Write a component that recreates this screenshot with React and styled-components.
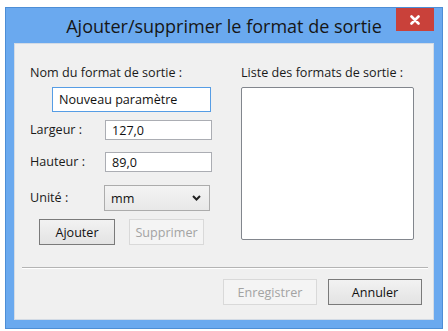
import styled, { createGlobalStyle } from "styled-components";

const Global = createGlobalStyle`
  body {
    margin: 0;
    background: #ffffff;
    font-family: "Open Sans", "Noto Sans", sans-serif;
  }
`;

const Window = styled.div`
  box-sizing: border-box;
  width: 438px;
  height: 322px;
  margin: 7px 0 0 5px;
  padding: 0 8px 8px;
  display: flex;
  flex-direction: column;
  background: #6aa9ef;
  border: 1px solid #4d8ed6;
`;

const TitleBar = styled.div`
  height: 35px;
  display: grid;
  grid-template-columns: 1fr auto 1fr;
  align-items: center;
`;

const Title = styled.div`
  grid-column: 2;
  font-size: 18px;
  color: #161616;
  white-space: nowrap;
`;

const CloseButton = styled.div`
  grid-column: 3;
  justify-self: end;
  align-self: start;
  width: 38px;
  height: 23px;
  display: flex;
  align-items: center;
  justify-content: center;
  background: #c9413a;
`;

const Body = styled.div`
  flex: 1;
  display: flex;
  flex-direction: column;
  background: #f0f0f0;
  box-shadow: inset 0 0 0 1px #d3dbe5;
`;

const Main = styled.div`
  display: flex;
  gap: 16px;
  padding: 23px 0 0 16px;
`;

const Column = styled.div`
  width: ${(p) => p.width}px;
  display: flex;
  flex-direction: column;
`;

const Label = styled.div`
  font-size: 12.6px;
  line-height: 14px;
  color: #1a1a1a;
  white-space: nowrap;
  width: ${(p) => (p.width ? `${p.width}px` : "auto")};
  flex-shrink: 0;
`;

const TextBox = styled.input`
  box-sizing: border-box;
  width: ${(p) => p.width}px;
  height: ${(p) => p.height}px;
  margin: ${(p) => p.margin || 0};
  padding: 0 6px;
  font-family: inherit;
  font-size: 12.6px;
  color: #111;
  background: #fff;
  border: 1px solid ${(p) => (p.focused ? "#569de5" : "#abadb3")};
  outline: none;
`;

const FieldRow = styled.div`
  display: flex;
  align-items: center;
  margin-top: ${(p) => p.top}px;
`;

const Select = styled.div`
  box-sizing: border-box;
  width: 106px;
  height: 26px;
  display: flex;
  align-items: center;
  justify-content: space-between;
  padding: 0 8px 0 6px;
  font-size: 12.6px;
  color: #111;
  background: linear-gradient(#f4f4f4, #e8e8e8);
  border: 1px solid #acacac;
`;

const ButtonRow = styled.div`
  display: flex;
  gap: 14px;
  margin-top: 8px;
  padding-left: 9px;
`;

const Button = styled.button`
  box-sizing: border-box;
  width: ${(p) => p.width}px;
  height: 26px;
  padding: 0;
  font-family: inherit;
  font-size: 12.6px;
  color: ${(p) => (p.disabled ? "#a3a3a3" : "#111")};
  background: ${(p) =>
    p.disabled ? "#f4f4f4" : "linear-gradient(#f2f2f2, #e3e3e3)"};
  border: 1px solid ${(p) => (p.disabled ? "#d9d9d9" : p.primary ? "#7a7a7a" : "#acacac")};
`;

const ListBox = styled.div`
  box-sizing: border-box;
  width: 173px;
  height: 153px;
  margin-top: 7px;
  background: #fff;
  border: 1px solid #82868d;
  border-radius: 2px;
`;

const Separator = styled.div`
  margin: 22px 6px 0 8px;
  border-top: 1px solid #b4b4b4;
  border-bottom: 1px solid #ffffff;
`;

const Footer = styled.div`
  display: flex;
  justify-content: flex-end;
  gap: 11px;
  margin-top: 10px;
  padding-right: 12px;
`;

const Chevron = () => (
  <svg width="9" height="6" viewBox="0 0 9 6">
    <path d="M1 1 L4.5 4.5 L8 1" fill="none" stroke="#222" strokeWidth="2" />
  </svg>
);

const CloseIcon = () => (
  <svg width="10" height="10" viewBox="0 0 10 10">
    <path d="M1.5 1.5 L8.5 8.5 M8.5 1.5 L1.5 8.5" stroke="#fff" strokeWidth="2.6" strokeLinecap="round" />
  </svg>
);

export default function App() {
  return (
    <>
      <Global />
      <Window>
        <TitleBar>
          <Title>Ajouter/supprimer le format de sortie</Title>
          <CloseButton>
            <CloseIcon />
          </CloseButton>
        </TitleBar>
        <Body>
          <Main>
            <Column width={195}>
              <Label>Nom du format de sortie :</Label>
              <TextBox
                focused
                width={159}
                height={25}
                margin="7px 0 0 22px"
                value="Nouveau paramètre"
                readOnly
              />
              <FieldRow top={8}>
                <Label width={75}>Largeur :</Label>
                <TextBox width={107} height={20} value="127,0" readOnly />
              </FieldRow>
              <FieldRow top={12}>
                <Label width={75}>Hauteur :</Label>
                <TextBox width={107} height={20} value="89,0" readOnly />
              </FieldRow>
              <FieldRow top={13}>
                <Label width={74}>Unité :</Label>
                <Select>
                  <span>mm</span>
                  <Chevron />
                </Select>
              </FieldRow>
              <ButtonRow>
                <Button primary width={76}>Ajouter</Button>
                <Button disabled width={75}>Supprimer</Button>
              </ButtonRow>
            </Column>
            <Column width={173}>
              <Label>Liste des formats de sortie :</Label>
              <ListBox />
            </Column>
          </Main>
          <Separator />
          <Footer>
            <Button disabled width={94}>Enregistrer</Button>
            <Button primary width={94}>Annuler</Button>
          </Footer>
        </Body>
      </Window>
    </>
  );
}
